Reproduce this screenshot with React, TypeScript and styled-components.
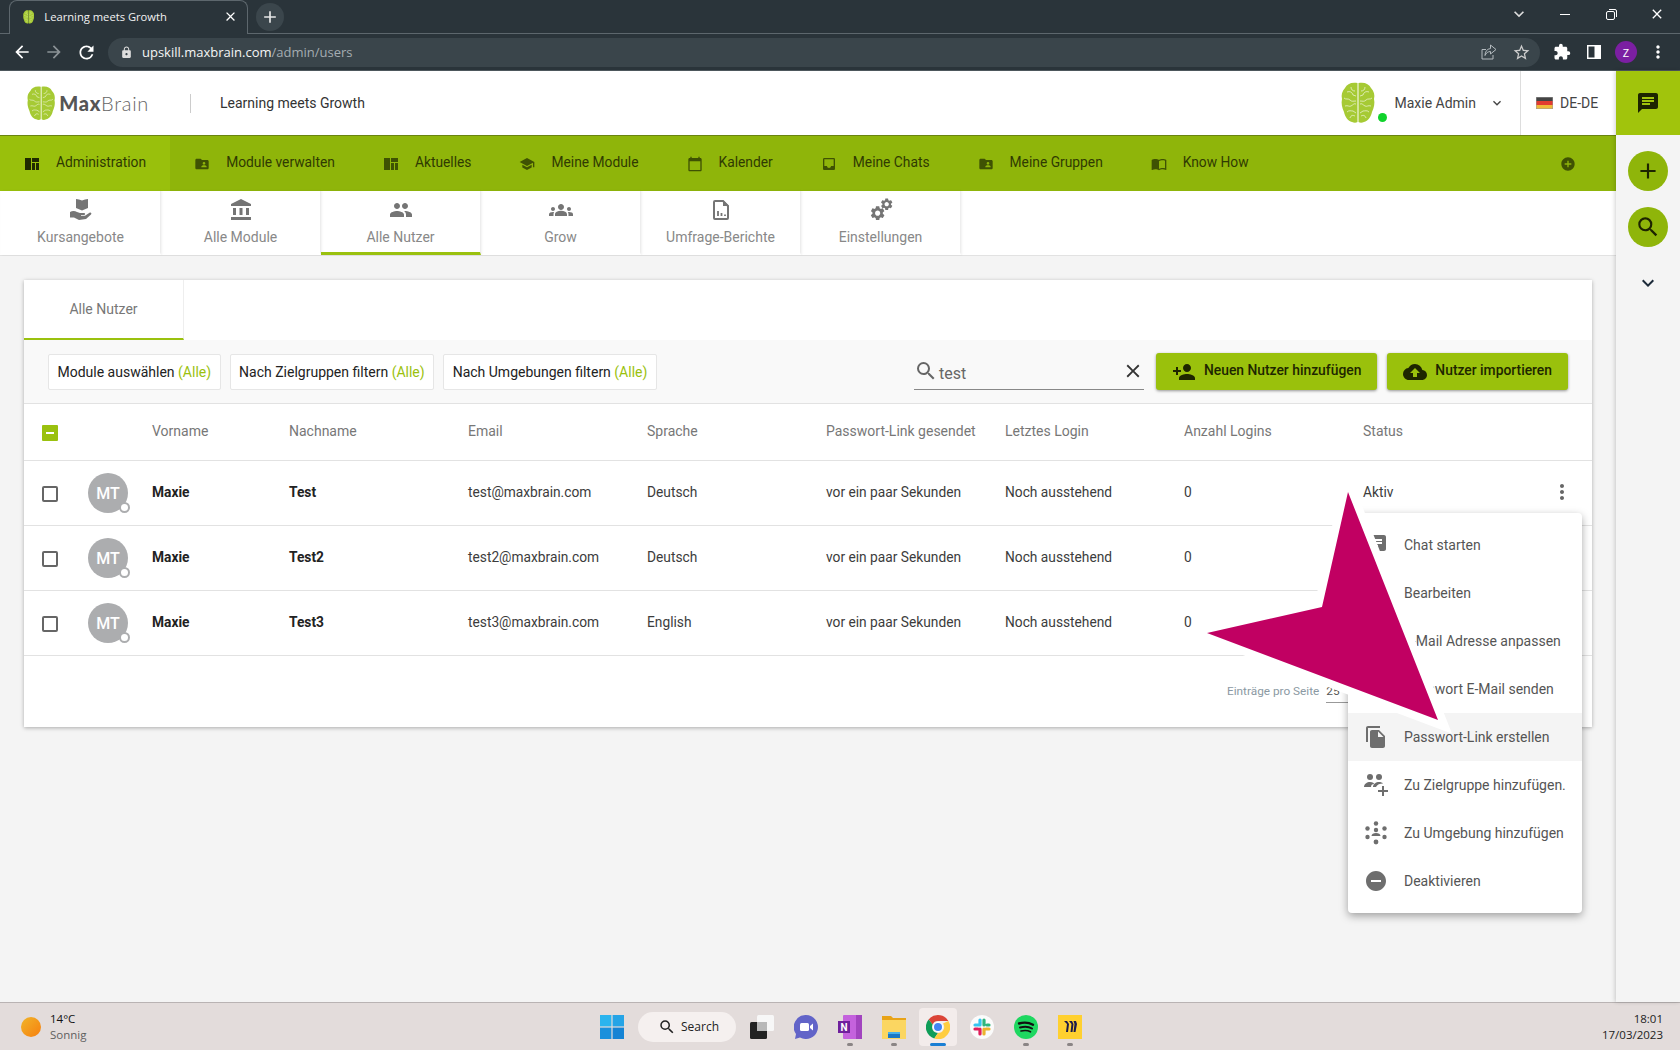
import React, {FC, ReactNode} from 'react';
import styled, {createGlobalStyle} from 'styled-components';
import {
    MdAccountBalance, MdAdd, MdAddCircle, MdArrowBack, MdArrowForward, MdCalendarToday, MdChat, MdClose,
    MdCloudUpload, MdEdit, MdEmail, MdExpandMore, MdExtension, MdFileCopy, MdFolderShared, MdGroups,
    MdImportContacts, MdInbox, MdLock, MdMoreVert, MdPeople, MdPersonAdd, MdRefresh,
    MdRemoveCircle, MdSchool, MdSearch, MdStarBorder
} from 'react-icons/md';

const GlobalStyle = createGlobalStyle`
  html, body { margin: 0; padding: 0; height: 100%; }
  body { font-family: Roboto, "Liberation Sans", sans-serif; background: #f4f4f4; }
  * { box-sizing: border-box; }
`

const Brain: FC<{ size: number; color?: string }> = ({size, color = '#a6ca34'}) => (
    <svg width={size * 34 / 42} height={size} viewBox="0 0 34 42">
        <path fill={color} d="M16.500 1C10 0 6 2 4 6 1 9 0 13 1 17c-1 4 0 9 2 13 1 5 4 9 8 10 2 1 4 1 5.500 0zM17.500 1c6.500-1 10.500 1 12.500 5 3 3 4 7 3 11 1 4 0 9-2 13-1 5-4 9-8 10-2 1-4 1-5.500 0z"/>
        <path fill="none" stroke="#fff" strokeWidth=".7" opacity=".85" d="M6 10c3-1 5 0 6 3l3 1M3 16c2 2 4 0 6 2s3 1 6 1M4 24c3-1 4 1 6 0s3-3 5-2M6 30c2-2 4-1 6-1l3 2M10 5c0 3 2 4 4 4M9 36c1-3 3-3 5-2M28 10c-3-1-5 0-6 3l-3 1M31 16c-2 2-4 0-6 2s-3 1-6 1M30 24c-3-1-4 1-6 0s-3-3-5-2M28 30c-2-2-4-1-6-1l-3 2M24 5c0 3-2 4-4 4M25 36c-1-3-3-3-5-2"/>
    </svg>
);

const LibraryIcon: FC = () => (
    <svg width="16" height="16" viewBox="0 0 16 16" fill="currentColor">
        <path d="M1 2h6v12H1zM8 2h7v4H8zM8 7h3v7H8zM12 7h3v7h-3z"/>
    </svg>
);

const HandBookIcon: FC = () => (
    <svg width="24" height="24" viewBox="0 0 24 24" fill="currentColor">
        <path d="M7 1c2 0 4 .5 6 1.500C15 1.500 17 1 19 1v9l-6 2.500L7 10z"/>
        <path d="M1 14c2-1.500 5-1.500 7 0l3 1h4c1.500 0 1.500 2 0 2h-3v.8h4l4.500-3c1.500-.7 2.500.8 1.500 1.800l-5 4.400-7 1-5-2.500H1z"/>
    </svg>
);

const ReportIcon: FC = () => (
    <svg width="24" height="24" viewBox="0 0 24 24" fill="none" stroke="currentColor" strokeWidth="2">
        <path d="M14 3H6a1 1 0 0 0-1 1v16a1 1 0 0 0 1 1h12a1 1 0 0 0 1-1V8z" strokeLinejoin="round"/>
        <path d="M14 2v6h6z" fill="currentColor" stroke="none"/>
        <path d="M9 18v-5M12.500 18v-3M16 18v-1.500" strokeWidth="1.800"/>
    </svg>
);

const gearPath = 'M19.14 12.94c.04-.3.06-.61.06-.94 0-.32-.02-.64-.07-.94l2.03-1.58a.49.49 0 0 0 .12-.61l-1.92-3.32a.488.488 0 0 0-.59-.22l-2.39.96c-.5-.38-1.03-.7-1.62-.94l-.36-2.54a.484.484 0 0 0-.48-.41h-3.84c-.24 0-.43.17-.47.41l-.36 2.54c-.59.24-1.13.57-1.62.94l-2.39-.96c-.22-.08-.47 0-.59.22L2.74 8.87c-.12.21-.08.47.12.61l2.03 1.58c-.05.3-.09.63-.09.94s.02.64.07.94l-2.03 1.58a.49.49 0 0 0-.12.61l1.92 3.32c.12.22.37.29.59.22l2.39-.96c.5.38 1.03.7 1.62.94l.36 2.54c.05.24.24.41.48.41h3.84c.24 0 .44-.17.47-.41l.36-2.54c.59-.24 1.13-.56 1.62-.94l2.39.96c.22.08.47 0 .59-.22l1.92-3.32c.12-.22.07-.47-.12-.61l-2.01-1.58zM12 15.6c-1.98 0-3.6-1.62-3.6-3.6s1.62-3.6 3.6-3.6 3.6 1.62 3.6 3.6-1.620 3.600-3.600 3.600z';

const GearsIcon: FC = () => (
    <svg width="24" height="24" viewBox="0 0 24 24" fill="currentColor">
        <path d={gearPath} transform="translate(0 6.500) scale(.72)"/>
        <path d={gearPath} transform="translate(10.500 -1) scale(.6)"/>
    </svg>
);

const TargetGroupIcon: FC = () => (
    <svg width="24" height="24" viewBox="0 0 24 24" fill="currentColor">
        <circle cx="6" cy="4" r="3"/>
        <circle cx="15" cy="4" r="3"/>
        <path d="M0 14c0-3 3-5 6-5s4 1 4 2c-2 0-3 1-3 3zM9 14c0-3 3-5 6-5 2 0 3 .5 4 1.500-3 0-6 1-7 3.500z"/>
        <path d="M18 13h2v4h4v2h-4v4h-2v-4h-4v-2h4z"/>
    </svg>
);

const EnvironmentIcon: FC = () => (
    <svg width="24" height="24" viewBox="0 0 24 24" fill="currentColor">
        <circle cx="12" cy="2.500" r="2.200"/>
        <circle cx="3.500" cy="7.500" r="2.200"/>
        <circle cx="20.500" cy="7.500" r="2.200"/>
        <circle cx="12" cy="9" r="2.200"/>
        <path d="M7.500 15c0-2 2-3 4.500-3s4.500 1 4.500 3z"/>
        <circle cx="3.500" cy="16" r="2.200"/>
        <circle cx="20.500" cy="16" r="2.200"/>
        <circle cx="12" cy="21" r="2.400"/>
    </svg>
);

const PanelIcon: FC = () => (
    <svg width="14" height="14" viewBox="0 0 14 14">
        <rect width="14" height="14" fill="#fff"/>
        <rect x="1.500" y="1.500" width="6" height="11" fill="#2a343a"/>
    </svg>
);

const RestoreIcon: FC = () => (
    <svg width="11" height="11" viewBox="0 0 11 11" fill="none" stroke="#fff" strokeWidth="1">
        <rect x=".5" y="2.500" width="8" height="8" rx="1.500"/>
        <path d="M3 .5h6a1.500 1.500 0 0 1 1.500 1.500v6"/>
    </svg>
);

const ShareIcon: FC = () => (
    <svg width="16" height="16" viewBox="0 0 16 16" fill="none" stroke="#b4bbbf" strokeWidth="1">
        <path d="M5 5.500H1v9.500h11v-4"/>
        <path d="M9.500 1l5.500 4.500-5.500 4.500V7.500C7 7.500 5 9 4 11.500c0-4 2-6.500 5.500-7z" strokeLinejoin="round"/>
    </svg>
);

const Flag: FC = () => (
    <svg width="17" height="12" viewBox="0 0 17 12">
        <rect width="17" height="4" fill="#444"/>
        <rect y="4" width="17" height="4" fill="#e23b30"/>
        <rect y="8" width="17" height="4" fill="#f0b93a"/>
        <rect x=".25" y=".25" width="16.500" height="11.500" fill="none" stroke="#999" strokeWidth=".5"/>
    </svg>
);

const WindowsLogo: FC = () => (
    <svg width="24" height="24" viewBox="0 0 24 24">
        <rect width="11.400" height="11.400" fill="#2bb4ee"/>
        <rect x="12.600" width="11.400" height="11.400" fill="#25a4e6"/>
        <rect y="12.600" width="11.400" height="11.400" fill="#1a90dc"/>
        <rect x="12.600" y="12.600" width="11.400" height="11.400" fill="#1583d4"/>
    </svg>
);

const TaskViewLogo: FC = () => (
    <svg width="24" height="24" viewBox="0 0 24 24">
        <rect x="7" y="0" width="17" height="16" rx="1.500" fill="#f7f7f7"/>
        <rect x="0" y="7" width="17" height="17" rx="1.500" fill="#222"/>
        <rect x="7" y="7" width="10" height="9" fill="#b8b8b8"/>
    </svg>
);

const MeetLogo: FC = () => (
    <svg width="24" height="24" viewBox="0 0 24 24">
        <path fill="#6264c8" d="M12 0a12 12 0 1 1-6 22.400L1 24l1-5A12 12 0 0 1 12 0z"/>
        <rect x="6" y="8" width="9" height="8" rx="1.500" fill="#fff"/>
        <path fill="#fff" d="M16 11l3-2.500v7L16 13z"/>
    </svg>
);

const NoteLogo: FC = () => (
    <svg width="24" height="24" viewBox="0 0 24 24">
        <rect x="5" y="0" width="19" height="24" rx="1" fill="#c462dd"/>
        <rect x="18" y="0" width="6" height="24" fill="#a244bf"/>
        <rect x="0" y="6" width="12" height="12" fill="#6f1f9c"/>
        <text x="6" y="15.500" fontSize="10" fontWeight="700" fill="#fff" textAnchor="middle" fontFamily="Roboto, sans-serif">N</text>
    </svg>
);

const FolderLogo: FC = () => (
    <svg width="24" height="24" viewBox="0 0 24 24">
        <path fill="#e8a317" d="M0 1h9l2 2h13v5H0z"/>
        <rect y="5" width="24" height="19" fill="#fbd661"/>
        <path fill="#1b78c4" d="M6 17h12v6H6z"/>
        <path fill="#48b2ea" d="M6 17h12v2H6z"/>
    </svg>
);

const ChromeLogo: FC = () => (
    <svg width="24" height="24" viewBox="0 0 24 24">
        <path fill="#db4437" d="M12 0a12 12 0 0 1 10.400 6H12a6 6 0 0 0-5.400 3.400L2.600 4.400A12 12 0 0 1 12 0z"/>
        <path fill="#0f9d58" d="M2.600 4.400l4 5a6 6 0 0 0 5.400 8.600l-3.700 5.500A12 12 0 0 1 2.600 4.400z"/>
        <path fill="#ffcd40" d="M22.400 6A12 12 0 0 1 8.300 23.500L12 18a6 6 0 0 0 5-9.500z"/>
        <circle cx="12" cy="12" r="5" fill="#fff"/>
        <circle cx="12" cy="12" r="4" fill="#4285f4"/>
    </svg>
);

const SlackLogo: FC = () => (
    <svg width="24" height="24" viewBox="0 0 24 24" fill="none" strokeWidth="3.200" strokeLinecap="round">
        <circle cx="12" cy="12" r="12" fill="#fbfbfb"/>
        <path stroke="#36c5f0" d="M10 5v5M5 10h3"/>
        <path stroke="#2eb67d" d="M14 5v5M19 10h-2"/>
        <path stroke="#ecb22e" d="M14 19v-5M19 14h-3"/>
        <path stroke="#e01e5a" d="M10 19v-5M5 14h3"/>
    </svg>
);

const SpotifyLogo: FC = () => (
    <svg width="24" height="24" viewBox="0 0 24 24" fill="none" stroke="#111" strokeLinecap="round">
        <circle cx="12" cy="12" r="12" fill="#1ed760" stroke="none"/>
        <path strokeWidth="2.400" d="M5 8.500c5-1.500 10-1 14 1.200"/>
        <path strokeWidth="2" d="M6 12.500c4-1 9-.8 12 1"/>
        <path strokeWidth="1.600" d="M7 16c3-.8 7-.6 9.500.8"/>
    </svg>
);

const MiroLogo: FC = () => (
    <svg width="24" height="24" viewBox="0 0 24 24">
        <rect width="24" height="24" fill="#ffd02f"/>
        <path fill="#1b1a4b" d="M6 6h3l2 3-1 8H8l1-8zM11 6h3l1.500 3-1 8h-2l1-8zM15.500 6H18l1 3-1.500 8h-2l1-8z"/>
    </svg>
);

const navItems: { label: string; icon: ReactNode; active?: boolean }[] = [
    {label: 'Administration', icon: <LibraryIcon/>, active: true},
    {label: 'Module verwalten', icon: <MdFolderShared size={16}/>},
    {label: 'Aktuelles', icon: <LibraryIcon/>},
    {label: 'Meine Module', icon: <MdSchool size={16}/>},
    {label: 'Kalender', icon: <MdCalendarToday size={16}/>},
    {label: 'Meine Chats', icon: <MdInbox size={16}/>},
    {label: 'Meine Gruppen', icon: <MdFolderShared size={16}/>},
    {label: 'Know How', icon: <MdImportContacts size={16}/>},
];

const tabs: { label: string; icon: ReactNode; active?: boolean }[] = [
    {label: 'Kursangebote', icon: <HandBookIcon/>},
    {label: 'Alle Module', icon: <MdAccountBalance size={24}/>},
    {label: 'Alle Nutzer', icon: <MdPeople size={24}/>, active: true},
    {label: 'Grow', icon: <MdGroups size={24}/>},
    {label: 'Umfrage-Berichte', icon: <ReportIcon/>},
    {label: 'Einstellungen', icon: <GearsIcon/>},
];

const columns = ['Vorname', 'Nachname', 'Email', 'Sprache', 'Passwort-Link gesendet', 'Letztes Login', 'Anzahl Logins', 'Status'];

const users = [
    {last: 'Test', email: 'test@maxbrain.com', lang: 'Deutsch'},
    {last: 'Test2', email: 'test2@maxbrain.com', lang: 'Deutsch'},
    {last: 'Test3', email: 'test3@maxbrain.com', lang: 'English'},
];

const menuItems: { label: string; icon: ReactNode; hover?: boolean }[] = [
    {label: 'Chat starten', icon: <MdChat size={24}/>},
    {label: 'Bearbeiten', icon: <MdEdit size={24}/>},
    {label: 'E-Mail Adresse anpassen', icon: <MdEmail size={24}/>},
    {label: 'Passwort E-Mail senden', icon: <MdLock size={24}/>},
    {label: 'Passwort-Link erstellen', icon: <MdFileCopy size={24}/>, hover: true},
    {label: 'Zu Zielgruppe hinzufügen.', icon: <TargetGroupIcon/>},
    {label: 'Zu Umgebung hinzufügen', icon: <EnvironmentIcon/>},
    {label: 'Deaktivieren', icon: <MdRemoveCircle size={24}/>},
];

const App: FC = () => {
    return (
        <Root>
            <GlobalStyle/>
            <TabStrip>
                <BrowserTab>
                    <Brain size={14}/>
                    <BrowserTabTitle>Learning meets Growth</BrowserTabTitle>
                    <MdClose size={15} color="#fff"/>
                </BrowserTab>
                <NewTab><MdAdd size={20}/></NewTab>
                <WindowControls>
                    <WindowSlot><MdExpandMore size={20} color="#ddd"/></WindowSlot>
                    <WindowSlot><MinimizeBar/></WindowSlot>
                    <WindowSlot><RestoreIcon/></WindowSlot>
                    <WindowSlot><MdClose size={16} color="#fff"/></WindowSlot>
                </WindowControls>
            </TabStrip>
            <BrowserToolbar>
                <ToolbarButton><MdArrowBack size={20}/></ToolbarButton>
                <ToolbarButton $muted><MdArrowForward size={20}/></ToolbarButton>
                <ToolbarButton><MdRefresh size={21}/></ToolbarButton>
                <Omnibox>
                    <MdLock size={13} color="#ddd"/>
                    <Url>upskill.maxbrain.com<UrlPath>/admin/users</UrlPath></Url>
                    <OmniboxIcons>
                        <ShareIcon/>
                        <MdStarBorder size={19} color="#ccc"/>
                    </OmniboxIcons>
                </Omnibox>
                <BrowserActions>
                    <ActionSlot><MdExtension size={18} color="#fff"/></ActionSlot>
                    <ActionSlot><PanelIcon/></ActionSlot>
                    <ActionSlot><ProfileBadge>Z</ProfileBadge></ActionSlot>
                    <ActionSlot><MdMoreVert size={20} color="#fff"/></ActionSlot>
                </BrowserActions>
            </BrowserToolbar>
            <Main>
                <Content>
                    <Header>
                        <Logo>
                            <Brain size={35}/>
                            <LogoText><b>Max</b>Brain</LogoText>
                        </Logo>
                        <Tagline>Learning meets Growth</Tagline>
                        <UserBox>
                            <UserAvatar>
                                <Brain size={42}/>
                                <OnlineDot/>
                            </UserAvatar>
                            <UserName>Maxie Admin</UserName>
                            <MdExpandMore size={16} color="#444"/>
                        </UserBox>
                        <LangBox><Flag/>DE-DE</LangBox>
                    </Header>
                    <NavBar>
                        {navItems.map(item => (
                            <NavItem key={item.label} $active={item.active}>
                                <NavIcon $active={item.active}>{item.icon}</NavIcon>
                                {item.label}
                            </NavItem>
                        ))}
                        <NavAdd><MdAddCircle size={16}/></NavAdd>
                    </NavBar>
                    <TabRow>
                        {tabs.map(tab => (
                            <TabItem key={tab.label} $active={tab.active}>
                                <TabIcon>{tab.icon}</TabIcon>
                                {tab.label}
                            </TabItem>
                        ))}
                    </TabRow>
                    <PageBody>
                        <Card>
                            <CardTabs>
                                <CardTab>Alle Nutzer</CardTab>
                            </CardTabs>
                            <Filters>
                                <FilterButton>Module auswählen <em>(Alle)</em></FilterButton>
                                <FilterButton>Nach Zielgruppen filtern <em>(Alle)</em></FilterButton>
                                <FilterButton>Nach Umgebungen filtern <em>(Alle)</em></FilterButton>
                                <SearchField>
                                    <MdSearch size={24} color="#666"/>
                                    <SearchValue>test</SearchValue>
                                    <MdClose size={22} color="#333"/>
                                </SearchField>
                                <ActionButton><MdPersonAdd size={24}/>Neuen Nutzer hinzufügen</ActionButton>
                                <ActionButton><MdCloudUpload size={24}/>Nutzer importieren</ActionButton>
                            </Filters>
                            <TableHead>
                                <CheckCell><IndeterminateBox/></CheckCell>
                                {columns.map(c => <HeadCell key={c}>{c}</HeadCell>)}
                            </TableHead>
                            {users.map(user => (
                                <TableRow key={user.email}>
                                    <CheckCell>
                                        <CheckBox/>
                                        <Avatar>MT<AvatarStatus/></Avatar>
                                    </CheckCell>
                                    <NameCell>Maxie</NameCell>
                                    <NameCell>{user.last}</NameCell>
                                    <Cell>{user.email}</Cell>
                                    <Cell>{user.lang}</Cell>
                                    <Cell>vor ein paar Sekunden</Cell>
                                    <Cell>Noch ausstehend</Cell>
                                    <Cell>0</Cell>
                                    <StatusCell>
                                        Aktiv
                                        <MdMoreVert size={24} color="#666"/>
                                    </StatusCell>
                                </TableRow>
                            ))}
                            <TableFooter>
                                Einträge pro Seite
                                <PerPage>25</PerPage>
                            </TableFooter>
                            <ContextMenu>
                                {menuItems.map(item => (
                                    <MenuItem key={item.label} $hover={item.hover}>
                                        <MenuIcon>{item.icon}</MenuIcon>
                                        {item.label}
                                    </MenuItem>
                                ))}
                            </ContextMenu>
                        </Card>
                    </PageBody>
                </Content>
                <SideBar>
                    <SideChat><MdChat size={24}/></SideChat>
                    <SideButton><MdAdd size={26}/></SideButton>
                    <SideButton><MdSearch size={26}/></SideButton>
                    <SideChevron><MdExpandMore size={24}/></SideChevron>
                </SideBar>
            </Main>
            <Taskbar>
                <Weather>
                    <Sun/>
                    <WeatherText>
                        <span>14°C</span>
                        <WeatherSub>Sonnig</WeatherSub>
                    </WeatherText>
                </Weather>
                <TaskIcons>
                    <TaskSlot><WindowsLogo/></TaskSlot>
                    <TaskSearch><MdSearch size={18}/>Search</TaskSearch>
                    <TaskSlot><TaskViewLogo/></TaskSlot>
                    <TaskSlot><MeetLogo/></TaskSlot>
                    <TaskSlot $mark="idle"><NoteLogo/></TaskSlot>
                    <TaskSlot $mark="idle"><FolderLogo/></TaskSlot>
                    <TaskSlot $mark="active"><ChromeLogo/></TaskSlot>
                    <TaskSlot><SlackLogo/></TaskSlot>
                    <TaskSlot $mark="idle"><SpotifyLogo/></TaskSlot>
                    <TaskSlot $mark="idle"><MiroLogo/></TaskSlot>
                </TaskIcons>
                <Clock>
                    <span>18:01</span>
                    <span>17/03/2023</span>
                </Clock>
            </Taskbar>
            <Annotation width="280" height="280" viewBox="0 0 280 280">
                <polygon points="158,17 132,132 17,158 248,245" fill="#fff" stroke="#fff" strokeWidth="16" strokeMiterlimit="3"/>
                <polygon points="158,17 132,132 17,158 248,245" fill="#c10062"/>
            </Annotation>
        </Root>
    );
};

export default App;

const Root = styled.div`
  position: relative;
  display: flex;
  flex-direction: column;
  height: 100vh;
  overflow: hidden;
`
const TabStrip = styled.div`
  height: 34px;
  flex: none;
  display: flex;
  align-items: flex-end;
  padding-left: 9px;
  background: #2a343a;
  border-bottom: 1px solid #5d676d;
`
const BrowserTab = styled.div`
  width: 239px;
  height: 34px;
  margin-bottom: -1px;
  padding: 0 9px 2px 13px;
  display: flex;
  align-items: center;
  background: #2a343a;
  border: 1px solid #5d676d;
  border-bottom: none;
  border-radius: 8px 8px 0 0;
`
const BrowserTabTitle = styled.span`
  flex: 1;
  margin-left: 10px;
  font-family: "Open Sans", sans-serif;
  font-size: 11.2px;
  color: #f2f2f2;
`
const NewTab = styled.div`
  width: 28px;
  height: 28px;
  margin: 0 0 2px 8px;
  display: flex;
  align-items: center;
  justify-content: center;
  border-radius: 50%;
  background: #3b464c;
  color: #e6e6e6;
`
const WindowControls = styled.div`
  margin-left: auto;
  height: 28px;
  margin-bottom: 5px;
  display: flex;
`
const WindowSlot = styled.div`
  width: 46px;
  display: flex;
  align-items: center;
  justify-content: center;
`
const MinimizeBar = styled.div`
  width: 10px;
  height: 1px;
  background: #fff;
`
const BrowserToolbar = styled.div`
  height: 37px;
  flex: none;
  display: flex;
  align-items: center;
  padding-left: 6px;
  background: #2a343a;
  border-bottom: 1px solid #4d575c;
`
const ToolbarButton = styled.div<{ $muted?: boolean }>`
  width: 32px;
  display: flex;
  justify-content: center;
  color: ${p => p.$muted ? '#8b9296' : '#fff'};
`
const Omnibox = styled.div`
  width: 1432px;
  height: 29px;
  margin-left: 6px;
  padding: 0 9px 0 12px;
  display: flex;
  align-items: center;
  border-radius: 15px;
  background: #3a454b;
`
const Url = styled.span`
  margin-left: 9px;
  font-family: "Open Sans", sans-serif;
  font-size: 13px;
  color: #f5f5f5;
`
const UrlPath = styled.span`
  color: #a5adb2;
`
const OmniboxIcons = styled.div`
  margin-left: auto;
  display: flex;
  align-items: center;
  gap: 15px;
`
const BrowserActions = styled.div`
  flex: 1;
  padding-left: 6px;
  display: flex;
  align-items: center;
`
const ActionSlot = styled.div`
  width: 32px;
  display: flex;
  align-items: center;
  justify-content: center;
`
const ProfileBadge = styled.div`
  width: 22px;
  height: 22px;
  display: flex;
  align-items: center;
  justify-content: center;
  border-radius: 50%;
  background: #7b1fa2;
  color: #fff;
  font-family: "Open Sans", sans-serif;
  font-size: 11px;
`
const Main = styled.div`
  flex: 1;
  min-height: 0;
  display: flex;
`
const Content = styled.div`
  flex: 1;
  min-width: 0;
  display: flex;
  flex-direction: column;
`
const Header = styled.div`
  height: 64px;
  flex: none;
  display: flex;
  align-items: center;
  background: #fff;
`
const Logo = styled.div`
  width: 163px;
  margin-left: 27px;
  display: flex;
  align-items: center;
  gap: 4px;
`
const LogoText = styled.span`
  font-family: Lato, sans-serif;
  font-size: 20px;
  font-weight: 300;
  letter-spacing: .7px;
  color: #666;
  b {
    font-weight: 900;
    color: #555;
  }
`
const Tagline = styled.div`
  height: 19px;
  padding-left: 29px;
  border-left: 1px solid #ccc;
  font-size: 14px;
  line-height: 19px;
  color: #333;
`
const UserBox = styled.div`
  margin-left: auto;
  padding-right: 15px;
  display: flex;
  align-items: center;
`
const UserAvatar = styled.div`
  position: relative;
  display: flex;
  margin-right: 19px;
`
const OnlineDot = styled.div`
  position: absolute;
  right: -12px;
  bottom: 2px;
  width: 9px;
  height: 9px;
  border-radius: 50%;
  background: #10d32c;
`
const UserName = styled.span`
  margin-right: 13px;
  font-size: 14px;
  color: #444;
`
const LangBox = styled.div`
  width: 96px;
  height: 64px;
  padding-left: 15px;
  display: flex;
  align-items: center;
  gap: 7px;
  border-left: 1px solid #ddd;
  font-size: 14px;
  color: #444;
`
const NavBar = styled.div`
  height: 56px;
  flex: none;
  display: flex;
  background: #8fb50a;
  border-top: 1px solid #6a8410;
`
const NavItem = styled.div<{ $active?: boolean }>`
  display: flex;
  align-items: center;
  padding: 0 24px 3px;
  font-size: 13.8px;
  white-space: nowrap;
  color: #2f3a02;
  background: ${p => p.$active ? '#99c00c' : 'transparent'};
`
const NavIcon = styled.span<{ $active?: boolean }>`
  display: flex;
  margin-right: 16px;
  margin-top: 3px;
  color: ${p => p.$active ? '#1f2a00' : '#3f5203'};
`
const NavAdd = styled.span`
  margin-left: auto;
  margin-right: 40px;
  display: flex;
  align-items: center;
  color: #3f5203;
`
const TabRow = styled.div`
  height: 65px;
  flex: none;
  padding-left: 1px;
  display: flex;
  background: #fff;
  border-bottom: 1px solid #e2e2e2;
`
const TabItem = styled.div<{ $active?: boolean }>`
  width: 160px;
  padding-top: 6px;
  display: flex;
  flex-direction: column;
  align-items: center;
  font-size: 14px;
  color: #888;
  border-right: 1px solid #eee;
  box-shadow: 1px 0 2px rgba(0, 0, 0, .06);
  border-bottom: 3px solid ${p => p.$active ? '#9ac10e' : 'transparent'};
`
const TabIcon = styled.span`
  height: 26px;
  margin-bottom: 6px;
  display: flex;
  align-items: center;
  color: #757575;
`
const PageBody = styled.div`
  flex: 1;
  padding: 24px 24px 0 24px;
  background: #f4f4f4;
`
const Card = styled.div`
  position: relative;
  height: 447px;
  background: #fff;
  box-shadow: 0 1px 4px rgba(0, 0, 0, .3);
`
const CardTabs = styled.div`
  height: 60px;
  display: flex;
`
const CardTab = styled.div`
  width: 160px;
  display: flex;
  align-items: center;
  justify-content: center;
  padding-bottom: 1px;
  font-size: 14px;
  color: #777;
  border-right: 1px solid #eee;
  border-bottom: 2px solid #9ac10e;
`
const Filters = styled.div`
  height: 64px;
  padding: 0 24px 0 24px;
  display: flex;
  align-items: center;
  gap: 9px;
  background: #f9f9f9;
  border-bottom: 1px solid #e2e2e2;
`
const FilterButton = styled.div`
  height: 36px;
  padding: 0 8.5px;
  display: flex;
  align-items: center;
  white-space: pre;
  font-size: 14px;
  color: #222;
  background: #fff;
  border: 1px solid #e6e6e6;
  border-radius: 2px;
  em {
    font-style: normal;
    color: #9ac10e;
  }
`
const SearchField = styled.div`
  width: 230px;
  height: 36px;
  margin: 0 3px 0 auto;
  display: flex;
  align-items: center;
  border-bottom: 1px solid #888;
`
const SearchValue = styled.span`
  flex: 1;
  margin-left: 1px;
  padding-top: 5px;
  font-size: 16px;
  color: #666;
`
const ActionButton = styled.div`
  height: 37px;
  padding: 0 16px 3px;
  display: flex;
  align-items: center;
  gap: 8px;
  font-size: 13.85px;
  font-weight: 500;
  white-space: nowrap;
  color: #1e2600;
  background: #9ac10c;
  border-radius: 3px;
  box-shadow: 0 1px 3px rgba(0, 0, 0, .4);
  svg {
    margin-top: 3px;
  }
  & + & {
    margin-left: 1px;
  }
`
const rowGrid = `
  display: grid;
  grid-template-columns: 128px 137px repeat(6, 179px) 1fr;
  align-items: center;
  border-bottom: 1px solid #e2e2e2;
`
const TableHead = styled.div`
  ${rowGrid};
  height: 57px;
  padding-bottom: 3px;
`
const TableRow = styled.div`
  ${rowGrid};
  height: 65px;
  padding-bottom: 3px;
`
const CheckCell = styled.div`
  padding-left: 18px;
  display: flex;
  align-items: center;
`
const IndeterminateBox = styled.div`
  position: relative;
  width: 16px;
  height: 16px;
  margin-top: 4px;
  border-radius: 1px;
  background: #9ac10e;
  &::after {
    content: '';
    position: absolute;
    left: 4px;
    top: 7px;
    width: 8px;
    height: 2px;
    background: #fff;
  }
`
const CheckBox = styled.div`
  width: 16px;
  height: 16px;
  margin-top: 4px;
  border: 2px solid #666;
  border-radius: 2px;
`
const Avatar = styled.div`
  position: relative;
  width: 40px;
  height: 40px;
  margin-left: 30px;
  margin-top: 3px;
  display: flex;
  align-items: center;
  justify-content: center;
  border-radius: 50%;
  background: #acadaf;
  color: #fff;
  font-size: 16px;
  font-weight: 500;
`
const AvatarStatus = styled.div`
  position: absolute;
  right: -2px;
  bottom: 0;
  width: 11px;
  height: 11px;
  border-radius: 50%;
  background: #fff;
  border: 2px solid #acadaf;
`
const HeadCell = styled.div`
  font-size: 14px;
  white-space: nowrap;
  color: #777;
`
const Cell = styled.div`
  font-size: 13.75px;
  white-space: nowrap;
  color: #3c3c3c;
`
const NameCell = styled(Cell)`
  font-weight: 700;
  color: #222;
`
const StatusCell = styled(Cell)`
  display: flex;
  align-items: center;
  justify-content: space-between;
  padding-right: 18px;
`
const TableFooter = styled.div`
  height: 70px;
  padding-left: 1203px;
  display: flex;
  align-items: center;
  font-size: 11.8px;
  white-space: nowrap;
  color: #8b99a3;
`
const PerPage = styled.div`
  margin-left: 7px;
  width: 60px;
  height: 24px;
  display: flex;
  align-items: center;
  color: #555;
  border-bottom: 1px solid #999;
`
const ContextMenu = styled.div`
  position: absolute;
  top: 233px;
  right: 10px;
  width: 234px;
  padding: 8px 0;
  background: #fff;
  border-radius: 4px;
  box-shadow: 0 3px 8px rgba(0, 0, 0, .35);
`
const MenuItem = styled.div<{ $hover?: boolean }>`
  height: 48px;
  padding: 0 0 1px 16px;
  display: flex;
  align-items: center;
  font-size: 14px;
  white-space: nowrap;
  color: #555;
  background: ${p => p.$hover ? '#f4f4f4' : 'transparent'};
`
const MenuIcon = styled.span`
  width: 24px;
  margin-right: 16px;
  display: flex;
  color: #6e6e6e;
`
const SideBar = styled.div`
  position: relative;
  width: 64px;
  flex: none;
  display: flex;
  flex-direction: column;
  align-items: center;
  gap: 16px;
  background: #f4f4f4;
  box-shadow: -1px 0 4px rgba(0, 0, 0, .18);
`
const SideChat = styled.div`
  align-self: stretch;
  height: 64px;
  display: flex;
  align-items: center;
  justify-content: center;
  background: #a1c40c;
  color: #1d2400;
`
const SideButton = styled.div`
  width: 40px;
  height: 40px;
  display: flex;
  align-items: center;
  justify-content: center;
  border-radius: 50%;
  background: #8fb50a;
  color: #1d2400;
`
const SideChevron = styled.div`
  margin-top: 8px;
  display: flex;
  color: #1d2b3a;
`
const Taskbar = styled.div`
  height: 48px;
  flex: none;
  display: grid;
  grid-template-columns: 1fr auto 1fr;
  align-items: center;
  background: #e3dcdb;
  border-top: 1px solid #b9b3b3;
  font-family: "Open Sans", sans-serif;
  font-size: 11.5px;
`
const Weather = styled.div`
  padding-left: 21px;
  display: flex;
  align-items: center;
  gap: 9px;
`
const Sun = styled.div`
  width: 20px;
  height: 20px;
  border-radius: 50%;
  background: linear-gradient(135deg, #f0b52a, #f77f0e);
`
const WeatherText = styled.div`
  display: flex;
  flex-direction: column;
  line-height: 16px;
  color: #111;
`
const WeatherSub = styled.span`
  color: #5f5f5f;
`
const TaskIcons = styled.div`
  display: flex;
  align-items: center;
  padding-left: 2px;
`
const TaskSlot = styled.div<{ $mark?: 'idle' | 'active' }>`
  position: relative;
  width: 38px;
  height: 38px;
  margin: 0 3px;
  display: flex;
  align-items: center;
  justify-content: center;
  border-radius: 4px;
  background: ${p => p.$mark === 'active' ? '#f3eceb' : 'transparent'};
  &::after {
    content: '';
    display: ${p => p.$mark ? 'block' : 'none'};
    position: absolute;
    bottom: 0;
    left: 50%;
    transform: translateX(-50%);
    width: ${p => p.$mark === 'active' ? '16px' : '6px'};
    height: 3px;
    border-radius: 2px;
    background: ${p => p.$mark === 'active' ? '#1a7fd4' : '#8a8585'};
  }
`
const TaskSearch = styled.div`
  width: 98px;
  height: 30px;
  margin: 0 4px;
  padding-left: 20px;
  display: flex;
  align-items: center;
  gap: 5px;
  border-radius: 15px;
  background: #f5f0ef;
  font-size: 12px;
  color: #222;
`
const Clock = styled.div`
  justify-self: end;
  padding-right: 17px;
  display: flex;
  flex-direction: column;
  align-items: flex-end;
  line-height: 16px;
  color: #222;
`
const Annotation = styled.svg`
  position: absolute;
  left: 1190px;
  top: 475px;
`
